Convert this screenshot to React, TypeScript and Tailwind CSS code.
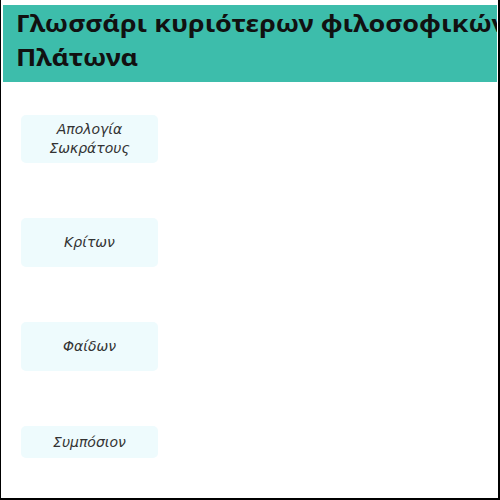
import React from "react";

const items = [
  { label: ["Απολογία", "Σωκράτους"], h: "h-[48px]" },
  { label: ["Κρίτων"], h: "h-[49px]" },
  { label: ["Φαίδων"], h: "h-[49px]" },
  { label: ["Συμπόσιον"], h: "h-[32px]" },
];

export default function App() {
  return (
    <div className="w-[500px] h-[500px] overflow-hidden bg-white border-l border-r-2 border-b-2 border-black pt-[5px]">
      <div className="ml-[2px] w-[494px] h-[77px] bg-[#3dbdab] overflow-hidden pl-[13px] pt-[1px]">
        <h1
          className="w-[640px] origin-left scale-x-[1.12] text-[24px] leading-[34px] font-bold text-[#111]"
          style={{ fontFamily: '"Noto Sans", "Open Sans", sans-serif' }}
        >
          Γλωσσάρι κυριότερων φιλοσοφικών όρων του Πλάτωνα
        </h1>
      </div>
      <div className="flex flex-col gap-[55px] pl-[20px] pt-[33px]">
        {items.map((it, i) => (
          <div
            key={i}
            className={`w-[137px] ${it.h} rounded-[5px] bg-[#eefbfd] flex flex-col items-center justify-center text-[14px] leading-[19px] italic text-[#333]`}
            style={{ fontFamily: '"DejaVu Sans", sans-serif' }}
          >
            {it.label.map((l) => (
              <span key={l}>{l}</span>
            ))}
          </div>
        ))}
      </div>
    </div>
  );
}
